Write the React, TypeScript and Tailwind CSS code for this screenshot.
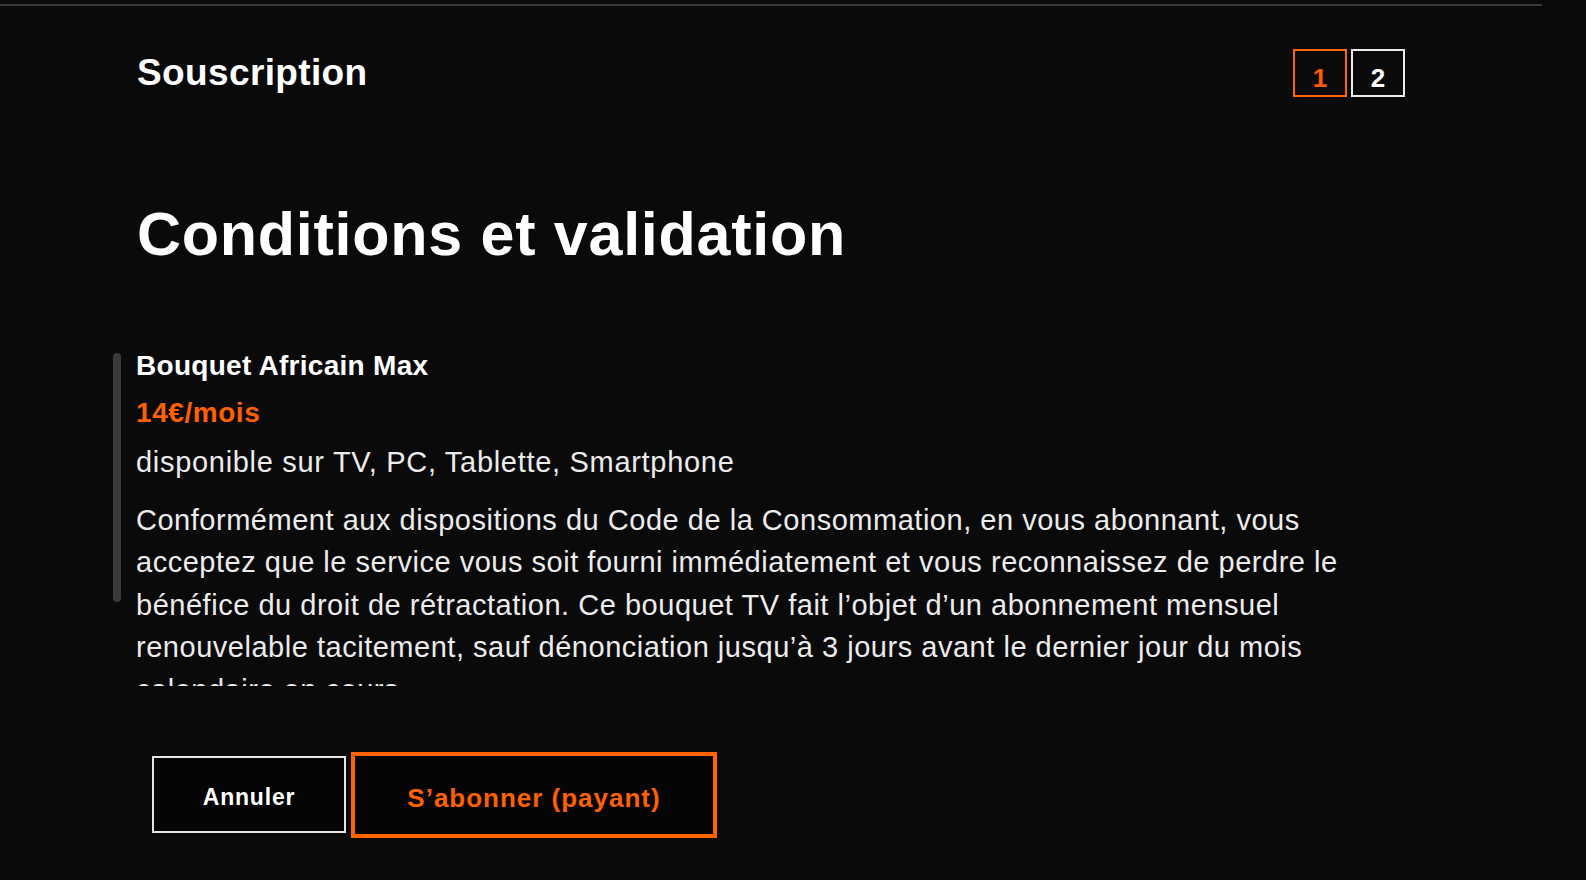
import React from "react";

const paragraph = [
  "Conformément aux dispositions du Code de la Consommation, en vous abonnant, vous",
  "acceptez que le service vous soit fourni immédiatement et vous reconnaissez de perdre le",
  "bénéfice du droit de rétractation. Ce bouquet TV fait l’objet d’un abonnement mensuel",
  "renouvelable tacitement, sauf dénonciation jusqu’à 3 jours avant le dernier jour du mois",
  "calendaire en cours.",
];

export default function App() {
  return (
    <div className="w-[1586px] h-[880px] overflow-hidden bg-[#0a0a0a] text-[#f2f2f2] font-['Liberation_Sans',Arial,sans-serif] flex flex-col">
      {/* top rule */}
      <div className="mt-[4px] h-[2px] w-[1542px] bg-[#3a3a3a]" />

      {/* header */}
      <div className="mt-[43px] h-[48px] flex items-start justify-between pl-[137px] pr-[181px]">
        <h2 className="text-[37px] leading-[48px] font-bold tracking-[0.01em] text-white">Souscription</h2>
        <div className="flex gap-[4px]">
          <div className="w-[54px] h-[48px] border-2 border-[#ff6400] flex justify-center pt-[14px]">
            <span className="text-[26px] leading-[26px] font-bold text-[#ff5a00]">1</span>
          </div>
          <div className="w-[54px] h-[48px] border-2 border-[#ececec] flex justify-center pt-[14px]">
            <span className="text-[26px] leading-[26px] font-bold text-white">2</span>
          </div>
        </div>
      </div>

      {/* title */}
      <h1 className="mt-[107px] pl-[137px] text-[61px] leading-[61px] font-bold tracking-[0.012em] text-white">
        Conditions et validation
      </h1>

      {/* scrollable content */}
      <div className="mt-[83px] flex pl-[113px] gap-[15px]">
        <div className="mt-[5px] w-[8px] h-[249px] rounded-full bg-[#3a3a3a]" />
        <div className="h-[338px] overflow-hidden flex flex-col">
          <div className="h-[36px] text-[28px] leading-[36px] font-bold tracking-[0.01em] text-white">
            Bouquet Africain Max
          </div>
          <div className="mt-[11px] h-[36px] text-[28px] leading-[36px] font-bold tracking-[0.02em] text-[#ff6000]">
            14€/mois
          </div>
          <div className="mt-[13px] h-[36px] text-[29px] leading-[36px] tracking-[0.024em] text-[#ececec]">
            disponible sur TV, PC, Tablette, Smartphone
          </div>
          <div className="mt-[19px] flex flex-col text-[29px] leading-[42.4px] tracking-[0.018em] text-[#ececec]">
            {paragraph.map((line) => (
              <span key={line} className="whitespace-nowrap">
                {line}
              </span>
            ))}
          </div>
        </div>
      </div>

      {/* buttons */}
      <div className="mt-[65px] h-[87px] flex items-center pl-[152px] gap-[5px]">
        <button className="w-[194px] h-[77px] border-2 border-[#e6e6e6] bg-[#050505] flex items-center justify-center pt-[5px]">
          <span className="text-[23px] font-bold tracking-[0.035em] text-white">Annuler</span>
        </button>
        <button className="w-[366px] h-[86px] border-[4px] border-[#ff6400] bg-[#050505] flex items-center justify-center pt-[8px]">
          <span className="text-[26px] font-bold tracking-[0.038em] text-[#ff6000]">S’abonner (payant)</span>
        </button>
      </div>
    </div>
  );
}
